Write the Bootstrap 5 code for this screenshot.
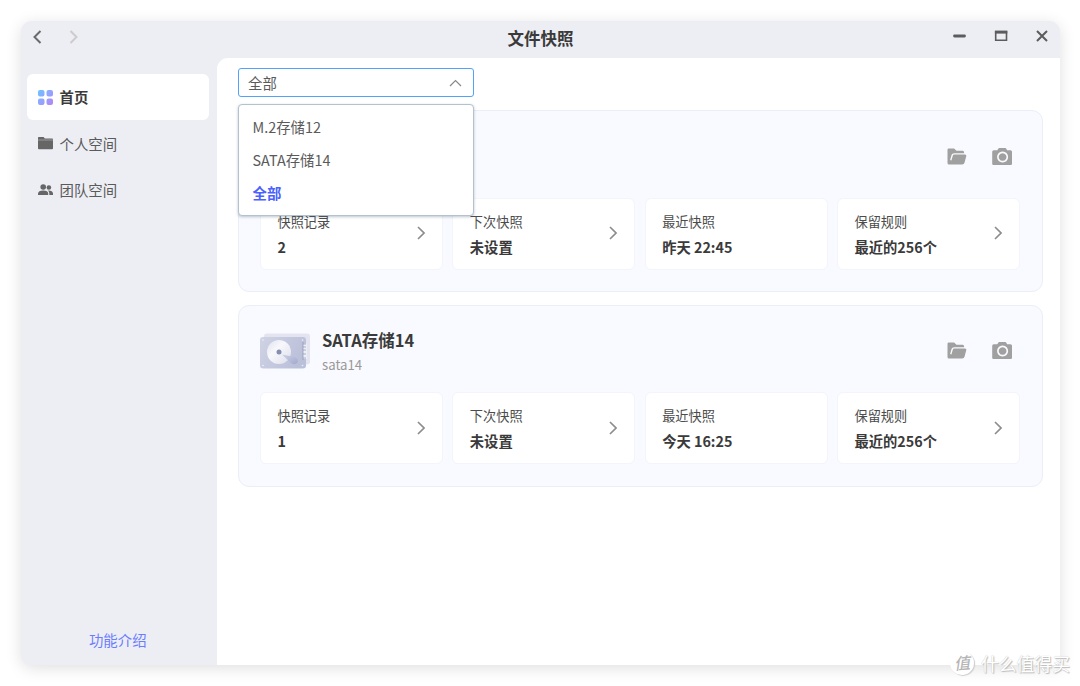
<!DOCTYPE html>
<html lang="zh-CN">
<head>
<meta charset="utf-8">
<meta name="viewport" content="width=device-width, initial-scale=1">
<title>文件快照</title>
<link href="https://cdn.jsdelivr.net/npm/bootstrap@5.3.0/dist/css/bootstrap.min.css" rel="stylesheet">
<style>
body{width:1080px;height:686px;overflow:hidden;background:#fff;color:#3a3a3a;font-family:"Noto Sans CJK SC",sans-serif;font-size:14.4px;line-height:20px;padding:21px 20.5px 0 20.5px}
svg{display:block;flex:none}
.window{height:644px;border-radius:11px 11px 4px 10px;background:#edeef4;box-shadow:0 3px 16px rgba(0,0,0,.13)}
.titlebar{height:36.5px;padding:0 11px 0 10px}
.titlebar h1{font-size:16.5px;line-height:24px;left:1px;right:0;top:5px}
.sidebar{width:196.5px;padding:16.5px 8px 15px 6px}
.side-item{height:46.5px;padding:0 0 0 11px;gap:7px;color:#5a5a5a;border-radius:6px}
.side-item.active{background:#fff;color:#3a3a3a;font-weight:700;height:46px}
.side-item+.side-item{padding-top:1px}
.intro{color:#6b7cff}
.content{background:#fff;border-radius:11px 0 4px 0;padding:10.5px 17px 0 21px}
.picker{width:236px;height:29px;margin-bottom:13px}
.picker-field{height:29px;border:1px solid #51a2f8;border-radius:3px;background:#fff;padding:0 11px 0 9px;color:#5a5a5a}
.picker-menu{top:35.5px;left:0;width:236px;height:112.5px;background:#fff;border:1px solid #b4c1ce;border-radius:4px;box-shadow:0 1px 3px rgba(70,90,110,.35);padding:5px 0;z-index:5}
.picker-menu div{height:33px;line-height:33px;padding-left:13.5px;color:#5a5a5a}
.picker-menu .chosen{color:#4a60ff;font-weight:700}
.volume{height:182px;background:#f9faff;border:1px solid #eaeef6;border-radius:11px;padding:23px 21.5px 0 21px;margin-bottom:12.5px}
.volume-head{height:63.5px}
.volume-head h2{font-size:16.5px;line-height:22px;margin:0 0 4.5px}
.volume-head p{font-size:13.2px;line-height:20px;color:#999;margin:0}
.actions{gap:25.5px;padding:13.5px 8px 0 0;color:#a0a0a0}
.tiles{gap:9.3px}
.tile{flex:1 1 0;height:72px;background:#fff;border:1px solid #f3f5fb;border-radius:6px;padding:11px 17px 0 16.5px}
.tile span{font-size:13.2px;color:#4c4c4c;line-height:24px;display:block}
.tile strong{font-size:14.3px;line-height:26px;display:block}
.tile svg{margin-top:16.5px;color:#8c8c8c}
.watermark{left:950px;top:649px;color:#fff;font-size:17.8px;line-height:28px;gap:7px;text-shadow:0 0 1px #bbb,1px 1px 1px #bbb}
.watermark i{width:24px;height:24px;border-radius:50%;background:#fff;box-shadow:1px 1px 1px #ccc;color:#b5b5b5;font-size:16px;font-weight:500;line-height:22px;text-align:center;text-shadow:none;transform:rotate(-5deg)}
</style>
</head>
<body>
<svg width="0" height="0" class="position-absolute">
<defs>
<linearGradient id="gHome" gradientUnits="userSpaceOnUse" x1="0" y1="0" x2="15" y2="15"><stop stop-color="#6bc2ff"/><stop offset=".5" stop-color="#93a4ff"/><stop offset="1" stop-color="#b683f3"/></linearGradient>
<linearGradient id="gDisk" x2="1" y2=".4"><stop stop-color="#d0d3e4"/><stop offset="1" stop-color="#bbc0da"/></linearGradient>
<linearGradient id="gPlate" x2="1" y2="1"><stop stop-color="#e0e2ee"/><stop offset=".4" stop-color="#f8f8fc"/><stop offset="1" stop-color="#dcdeeb"/></linearGradient>
<linearGradient id="gArm" x2="1" y2="1"><stop stop-color="#ced2e6"/><stop offset="1" stop-color="#a2a9cd"/></linearGradient>
</defs>
<symbol id="folder" viewBox="0 0 20 17"><path fill="currentColor" d="M1.8.5h5.3l2.4 2.200h6.200q1.400 0 1.400 1.700v.8H7.200q-2.100 0-2.600 1.600L3.100 12l1.300.4L5.800 7.800q.3-1.300 1.400-1.300H18q1.700 0 1.300 1.500l-1.800 6.700q-.5 1.800-2.200 1.800H2Q.5 16.500.5 15V1.800Q.5.5 1.800.5Z"/></symbol>
<symbol id="camera" viewBox="0 0 20 17"><path fill="currentColor" fill-rule="evenodd" d="M7.400 0h5.800q.8 0 1.100.8l.8 1.400h3.400q1.500 0 1.500 1.500v12q0 1.200-1.200 1.200H1.400Q.2 16.900.2 15.700V3.700q0-1.500 1.500-1.500h3.600l.9-1.400Q6.600 0 7.400 0Zm3.200 3.500a5.500 5.500 0 1 0 .01 0ZM10.600 5.200a3.800 3.800 0 1 1-.01 0Z"/></symbol>
<symbol id="chevron" viewBox="0 0 8 14"><path d="M1 1l6 6-6 6" fill="none" stroke="currentColor" stroke-width="1.600"/></symbol>
</svg>
<div class="window d-flex flex-column position-relative">
  <header class="titlebar d-flex align-items-center position-relative">
    <svg width="48" height="14" viewBox="0 0 48 14" style="margin-top:-5px" fill="none" stroke-width="2"><path d="M9.500 1L3.500 7l6 6" stroke="#6a6a6a"/><path d="M39.500 1l6 6-6 6" stroke="#ccc"/></svg>
    <h1 class="position-absolute text-center fw-bold m-0">文件快照</h1>
    <svg class="ms-auto" width="96" height="14" viewBox="0 0 96 14" style="margin-top:-7px" fill="none" stroke="#5c5c5c"><path d="M1.500 7h10" stroke-width="2.800" stroke-linecap="round"/><path d="M42.700 2.600h10.800v8.600H42.700z" stroke-width="1.600"/><path d="M41.900 3.200h12.400" stroke-width="2.800"/><path d="M84 2l10 10M94 2L84 12" stroke-width="2"/></svg>
  </header>
  <div class="d-flex flex-grow-1">
    <nav class="sidebar d-flex flex-column flex-shrink-0">
      <div class="side-item active d-flex align-items-center"><svg width="15" height="15" viewBox="0 0 15 15" fill="url(#gHome)"><path d="M2 0h2.500q2 0 2 2v2.500q0 2-2 2H2q-2 0-2-2V2Q0 0 2 0ZM10.500 0H13q2 0 2 2v2.500q0 2-2 2h-2.500q-2 0-2-2V2q0-2 2-2ZM2 8.500h2.500q2 0 2 2V13q0 2-2 2H2q-2 0-2-2v-2.500q0-2 2-2ZM10.500 8.500H13q2 0 2 2V13q0 2-2 2h-2.500q-2 0-2-2v-2.500q0-2 2-2Z"/></svg>首页</div>
      <div class="side-item d-flex align-items-center"><svg width="15" height="13" viewBox="0 0 15 13"><path fill="#999" d="M0 2h15v2H0z"/><path fill="#666" d="M.8 0h4.800l1.200 1.500h7.400q.8 0 .8.700v.4H0V.8Q0 0 .8 0ZM0 3.500h15v7.700q0 1-.9 1H.9q-.9 0-.9-1Z"/></svg>个人空间</div>
      <div class="side-item d-flex align-items-center"><svg width="15" height="12" viewBox="0 0 15 12" fill="#666"><circle cx="5.200" cy="3" r="2.800"/><path d="M0 11V9.600Q.3 6.400 5.200 6.400t5 3.200V11Z"/><circle cx="10.900" cy="3.500" r="2.300"/><path d="M10.300 6.600q4.500.1 4.700 3V11h-3.700V9.600q0-1.800-1.500-3Z"/></svg>团队空间</div>
      <div class="intro mt-auto text-center">功能介绍</div>
    </nav>
    <main class="content flex-grow-1">
      <div class="picker position-relative">
        <div class="picker-field d-flex align-items-center justify-content-between">全部<svg width="13" height="8" viewBox="0 0 13 8"><path d="M1 7l5.500-5.500L12 7" fill="none" stroke="#888" stroke-width="1.200"/></svg></div>
        <div class="picker-menu position-absolute"><div>M.2存储12</div><div>SATA存储14</div><div class="chosen">全部</div></div>
      </div>
      <section class="volume">
        <div class="volume-head d-flex">
          <div class="actions d-flex ms-auto"><svg width="20" height="17"><use href="#folder"/></svg><svg width="20" height="17"><use href="#camera"/></svg></div>
        </div>
        <div class="tiles d-flex">
          <div class="tile d-flex justify-content-between"><div><span>快照记录</span><strong>2</strong></div><svg width="8" height="14"><use href="#chevron"/></svg></div>
          <div class="tile d-flex justify-content-between"><div><span>下次快照</span><strong>未设置</strong></div><svg width="8" height="14"><use href="#chevron"/></svg></div>
          <div class="tile"><span>最近快照</span><strong>昨天 22:45</strong></div>
          <div class="tile d-flex justify-content-between"><div><span>保留规则</span><strong>最近的256个</strong></div><svg width="8" height="14"><use href="#chevron"/></svg></div>
        </div>
      </section>
      <section class="volume">
        <div class="volume-head d-flex">
          <svg width="50" height="36" viewBox="0 0 50 36" style="margin:4px 12.500px 0 -.5px"><rect x="4" y=".5" width="46" height="31" rx="3" fill="#e3e4ef"/><rect x="0" y="4" width="46" height="31.500" rx="3" fill="url(#gDisk)"/><path d="M43 10.500h4v15.500h-4z" fill="#eceef5"/><path d="M43 9v18M43 11h3m-3 3h3m-3 3h3m-3 4h3m-3 4h3" stroke="#8f94b0" stroke-width=".7"/><circle cx="19" cy="19" r="12" fill="url(#gPlate)"/><path d="M22 21.500l13 2.500q4 2.500 2.500 5.500-2 3-6 1Z" fill="url(#gArm)"/><circle cx="19" cy="19" r="2.500" fill="#878dae"/><g fill="#eff0f8"><circle cx="3" cy="7" r=".8"/><circle cx="3" cy="32.500" r=".8"/><circle cx="42.500" cy="7" r=".8"/><circle cx="42.500" cy="32.500" r=".8"/></g></svg>
          <div><h2 class="fw-bold">SATA存储14</h2><p>sata14</p></div>
          <div class="actions d-flex ms-auto"><svg width="20" height="17"><use href="#folder"/></svg><svg width="20" height="17"><use href="#camera"/></svg></div>
        </div>
        <div class="tiles d-flex">
          <div class="tile d-flex justify-content-between"><div><span>快照记录</span><strong>1</strong></div><svg width="8" height="14"><use href="#chevron"/></svg></div>
          <div class="tile d-flex justify-content-between"><div><span>下次快照</span><strong>未设置</strong></div><svg width="8" height="14"><use href="#chevron"/></svg></div>
          <div class="tile"><span>最近快照</span><strong>今天 16:25</strong></div>
          <div class="tile d-flex justify-content-between"><div><span>保留规则</span><strong>最近的256个</strong></div><svg width="8" height="14"><use href="#chevron"/></svg></div>
        </div>
      </section>
    </main>
  </div>
</div>
<div class="watermark position-absolute d-flex align-items-center"><i>值</i><span>什么值得买</span></div>
<script src="https://cdn.jsdelivr.net/npm/bootstrap@5.3.0/dist/js/bootstrap.bundle.min.js"></script>
</body>
</html>
